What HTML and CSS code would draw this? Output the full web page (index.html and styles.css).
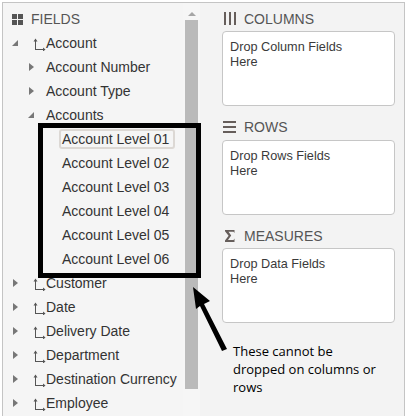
FILE: index.html
```html
<!DOCTYPE html>
<html lang="en">
<head>
<meta charset="utf-8">
<title>Fields</title>
<link rel="stylesheet" href="styles.css">
</head>
<body>
<div class="frame">
  <section class="fields">
    <div class="tree">
      <div class="row head"><svg class="grid-ic" viewBox="0 0 12 11"><path d="M0 0h5v5H0zM6 0h5v5H6zM0 6h5v5H0zM6 6h5v5H6z"/></svg><span>FIELDS</span></div>
      <div class="row l0"><svg class="tw" viewBox="0 0 6 6"><path d="M6 0v6H0z"/></svg><svg class="hier" viewBox="0 0 13 13"><path d="M2 3h1v8h7V9.500l2.500 2-2.500 2V12H2zM.5 3.500 2.500.5l2 3z"/></svg><span>Account</span></div>
      <div class="row l1"><svg class="tr" viewBox="0 0 5 8"><path d="M0 0l5 4-5 4z"/></svg><span>Account Number</span></div>
      <div class="row l1"><svg class="tr" viewBox="0 0 5 8"><path d="M0 0l5 4-5 4z"/></svg><span>Account Type</span></div>
      <div class="row l1"><svg class="tw" viewBox="0 0 6 6"><path d="M6 0v6H0z"/></svg><span>Accounts</span></div>
      <div class="row l2"><span class="sel">Account Level 01</span></div>
      <div class="row l2"><span>Account Level 02</span></div>
      <div class="row l2"><span>Account Level 03</span></div>
      <div class="row l2"><span>Account Level 04</span></div>
      <div class="row l2"><span>Account Level 05</span></div>
      <div class="row l2"><span>Account Level 06</span></div>
      <div class="row l0"><svg class="tr" viewBox="0 0 5 8"><path d="M0 0l5 4-5 4z"/></svg><svg class="hier" viewBox="0 0 13 13"><path d="M2 3h1v8h7V9.500l2.500 2-2.500 2V12H2zM.5 3.500 2.500.5l2 3z"/></svg><span>Customer</span></div>
      <div class="row l0"><svg class="tr" viewBox="0 0 5 8"><path d="M0 0l5 4-5 4z"/></svg><svg class="hier" viewBox="0 0 13 13"><path d="M2 3h1v8h7V9.500l2.500 2-2.500 2V12H2zM.5 3.500 2.500.5l2 3z"/></svg><span>Date</span></div>
      <div class="row l0"><svg class="tr" viewBox="0 0 5 8"><path d="M0 0l5 4-5 4z"/></svg><svg class="hier" viewBox="0 0 13 13"><path d="M2 3h1v8h7V9.500l2.500 2-2.500 2V12H2zM.5 3.500 2.500.5l2 3z"/></svg><span>Delivery Date</span></div>
      <div class="row l0"><svg class="tr" viewBox="0 0 5 8"><path d="M0 0l5 4-5 4z"/></svg><svg class="hier" viewBox="0 0 13 13"><path d="M2 3h1v8h7V9.500l2.500 2-2.500 2V12H2zM.5 3.500 2.500.5l2 3z"/></svg><span>Department</span></div>
      <div class="row l0"><svg class="tr" viewBox="0 0 5 8"><path d="M0 0l5 4-5 4z"/></svg><svg class="hier" viewBox="0 0 13 13"><path d="M2 3h1v8h7V9.500l2.500 2-2.500 2V12H2zM.5 3.500 2.500.5l2 3z"/></svg><span>Destination Currency</span></div>
      <div class="row l0"><svg class="tr" viewBox="0 0 5 8"><path d="M0 0l5 4-5 4z"/></svg><svg class="hier" viewBox="0 0 13 13"><path d="M2 3h1v8h7V9.500l2.500 2-2.500 2V12H2zM.5 3.500 2.500.5l2 3z"/></svg><span>Employee</span></div>
    </div>
    <div class="scroll">
      <svg class="up" viewBox="0 0 8 4"><path d="M4 0l4 4H0z"/></svg>
      <div class="thumb"></div>
    </div>
  </section>
  <section class="zones">
    <div class="zone">
      <h2><svg class="zi" viewBox="0 0 13 13"><path d="M1 0h2v13H1zM6 0h2v13H6zM11 0h2v13h-2z"/></svg>COLUMNS</h2>
      <div class="drop">Drop Column Fields<br>Here</div>
    </div>
    <div class="zone">
      <h2><svg class="zi" viewBox="0 0 13 13"><path d="M0 0h13v2H0zM0 5h13v2H0zM0 10h13v2H0z"/></svg>ROWS</h2>
      <div class="drop">Drop Rows Fields<br>Here</div>
    </div>
    <div class="zone">
      <h2><svg class="zi sigma" viewBox="0 0 10 12"><path d="M0 0h9.500v3L8.500 1.800H3.500L6.200 5.600 3 10h5.500l1-1.400V12H0v-1.500L3.600 5.800 0 1.300z"/></svg>MEASURES</h2>
      <div class="drop">Drop Data Fields<br>Here</div>
    </div>
  </section>
</div>
<div class="mark"></div>
<svg class="arrow" viewBox="0 0 409 416"><path d="M193 287 210 301 204 304 227 349 222 351 200 306 196 309z"/></svg>
<p class="note">These cannot be dropped on columns or rows</p>
</body>
</html>
```
FILE: styles.css
```css
* { box-sizing: border-box; }
html, body { margin: 0; padding: 0; }
body {
  width: 409px;
  height: 416px;
  overflow: hidden;
  background: #fff;
  position: relative;
  font-family: "Liberation Sans", Arial, sans-serif;
  color: #333;
}
.frame {
  display: flex;
  width: 403px;
  height: 416px;
  margin: 2px 0 0 2px;
  border: 1px solid #c4c4c4;
  border-bottom: 0;
  background: #f3f3f3;
}
.fields {
  display: flex;
  width: 197px;
  flex: none;
  background: #f5f5f5;
}
.tree {
  width: 180px;
  flex: none;
  padding-top: 4px;
}
.row {
  height: 24px;
  display: flex;
  align-items: center;
  font-size: 14px;
  white-space: nowrap;
}
.head { padding-left: 9px; color: #555; }
.grid-ic { width: 12px; height: 11px; fill: #555; margin-right: 7px; flex: none; }
.l0 { padding-left: 9px; }
.l1 { padding-left: 24px; }
.l2 { padding-left: 59px; }
.tr { width: 5px; height: 8px; fill: #777; flex: none; }
.tw { width: 6px; height: 6px; fill: #777; flex: none; }
.l0 .tr { margin-left: 1px; margin-right: 15px; }
.l0 .tw { margin-right: 15px; }
.l1 .tr { margin-left: 2px; margin-right: 12px; }
.l1 .tw { margin-left: 1px; margin-right: 12px; }
.hier {
  width: 13px;
  height: 13px;
  fill: #555;
  flex: none;
  margin-top: 2px;
}
.sel {
  padding: 0 4px 0 1px;
  height: 20px;
  line-height: 16px;
  border: 2px solid #dcd8d4;
  border-radius: 3px;
  margin-left: -3px;
}
.scroll {
  width: 17px;
  flex: none;
  display: flex;
  flex-direction: column;
  align-items: center;
  background: #f6f6f6;
  padding-top: 9px;
}
.up { width: 8px; height: 4px; fill: #a6a6a6; flex: none; }
.thumb {
  width: 13px;
  height: 369px;
  margin-top: 4px;
  background: #bababa;
  flex: none;
}
.zones {
  flex: 1;
  padding: 6px 9px 0 22px;
}
.zone { margin-bottom: 11.5px; }
.zone h2 {
  margin: 0 0 3px;
  height: 19px;
  display: flex;
  align-items: center;
  font-size: 14px;
  font-weight: 400;
  color: #555;
}
.zi { width: 13px; height: 13px; fill: #665e5b; margin: 0 8px 0 1px; flex: none; }
.sigma { width: 10px; height: 12px; margin: 1px 9px 0 3px; }
.drop {
  height: 75px;
  width: 173px;
  padding: 8px 7px;
  background: #fff;
  border: 1px solid #c6c6c6;
  border-radius: 4px;
  font-size: 12.7px;
  line-height: 15px;
  color: #3a3a3a;
}
.mark {
  position: absolute;
  left: 38px;
  top: 123px;
  width: 163px;
  height: 155px;
  border: 5px solid #000;
}
.arrow {
  position: absolute;
  left: 0;
  top: 0;
  width: 409px;
  height: 416px;
  fill: #000;
}
.note {
  position: absolute;
  left: 233px;
  top: 342px;
  width: 150px;
  margin: 0;
  font-family: "Open Sans", sans-serif;
  font-size: 13px;
  line-height: 18px;
  color: #000;
}
```
